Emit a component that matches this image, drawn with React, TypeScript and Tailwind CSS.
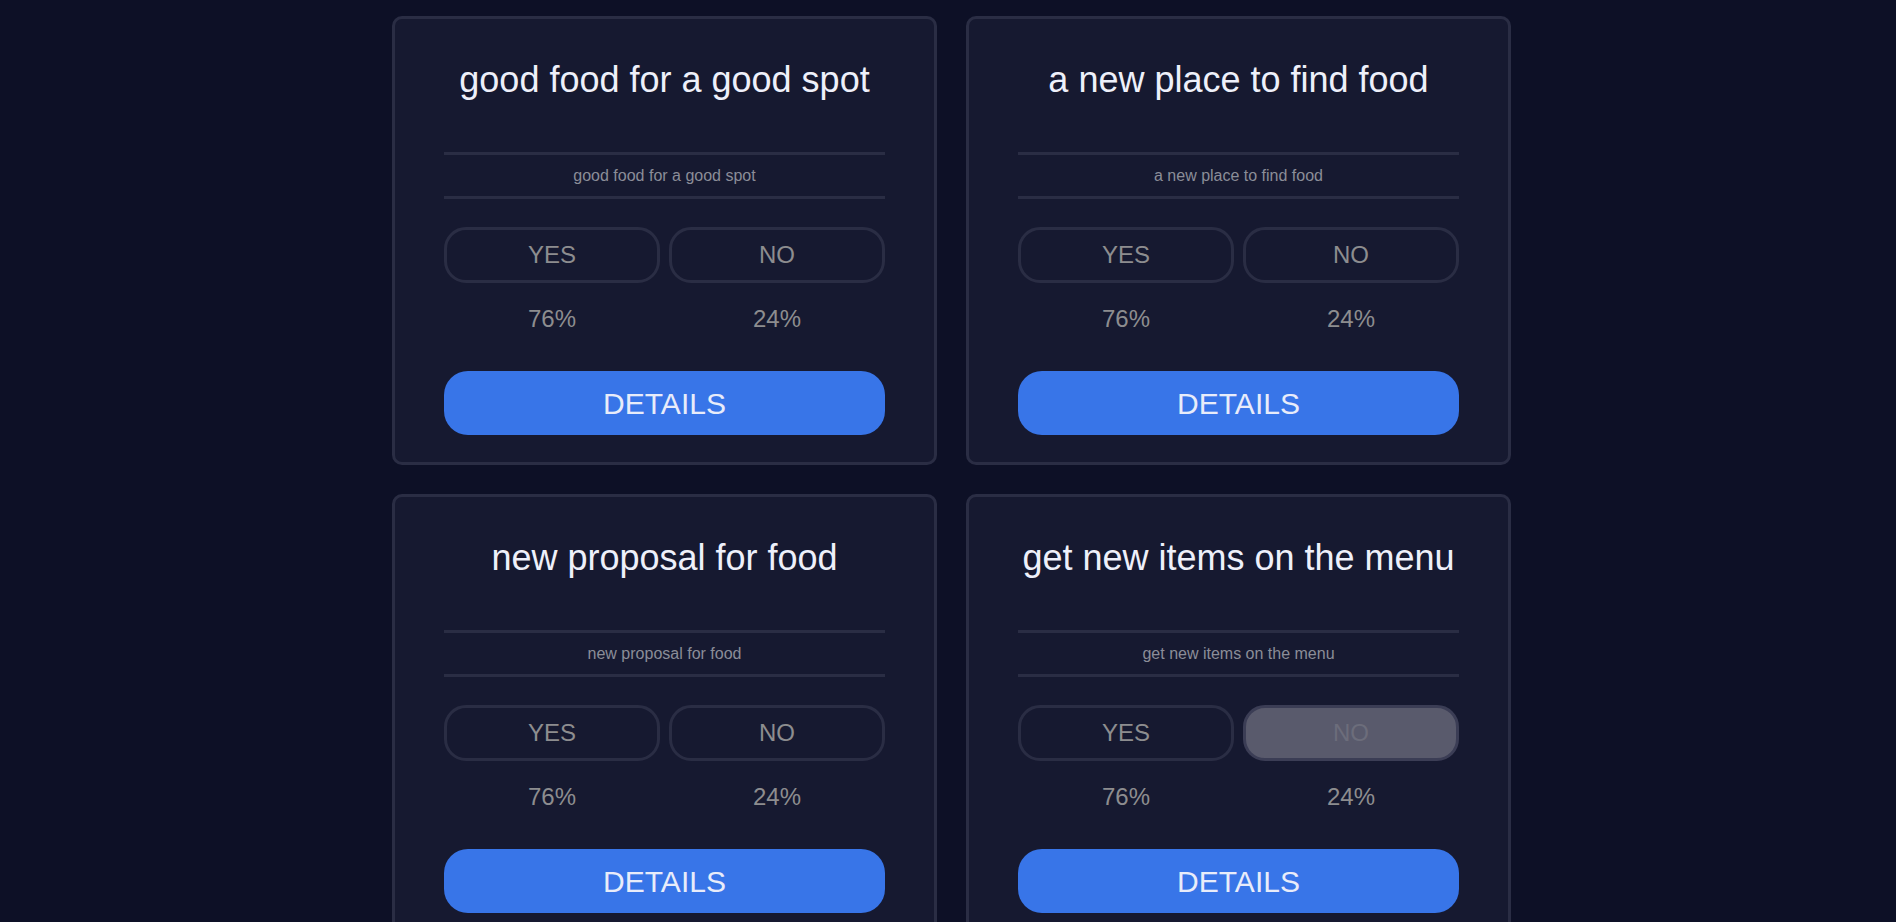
import React from "react";

type Poll = { title: string; yes: number; no: number; noDisabled?: boolean };

const polls: Poll[] = [
  { title: "good food for a good spot", yes: 76, no: 24 },
  { title: "a new place to find food", yes: 76, no: 24 },
  { title: "new proposal for food", yes: 76, no: 24 },
  { title: "get new items on the menu", yes: 76, no: 24, noDisabled: true },
];

function Card({ poll }: { poll: Poll }) {
  return (
    <div className="w-[545px] rounded-[10px] border-[3px] border-[#2a2d44] bg-[#161930] px-[49px] pt-[41px] pb-[27px]">
      <h2 className="text-center text-[36px] leading-[40px] text-[#eef0fa] font-normal">
        {poll.title}
      </h2>
      <div className="mt-[52px] border-y-[3px] border-[#2a2d44] py-[8px] text-center text-[16px] leading-[25px] text-[#8b8d98]">
        {poll.title}
      </div>
      <div className="mt-[28px] grid grid-cols-2 gap-[9px]">
        <button className="h-[56px] rounded-[22px] border-[3px] border-[#2a2d44] bg-transparent text-[24px] text-[#8d8d8f]">
          YES
        </button>
        {poll.noDisabled ? (
          <button className="h-[56px] rounded-[22px] border-[3px] border-[#3b3d55] bg-[#595a6c] text-[24px] text-[#6c6d7b]">
            NO
          </button>
        ) : (
          <button className="h-[56px] rounded-[22px] border-[3px] border-[#2a2d44] bg-transparent text-[24px] text-[#8d8d8f]">
            NO
          </button>
        )}
      </div>
      <div className="mt-[20px] grid grid-cols-2 gap-[9px] text-center text-[24px] leading-[32px] text-[#8d8d8f]">
        <div>{poll.yes}%</div>
        <div>{poll.no}%</div>
      </div>
      <button className="mt-[36px] h-[64px] w-full rounded-[24px] bg-[#3875e8] text-[30px] text-[#e8ecfa]">
        DETAILS
      </button>
    </div>
  );
}

export default function App() {
  return (
    <div
      className="min-h-screen w-full bg-[#0d1026] pt-[16px] pb-[30px]"
      style={{ fontFamily: '"Liberation Sans", Arial, sans-serif' }}
    >
      <div className="flex justify-center pl-[7px]">
        <div className="grid grid-cols-[545px_545px] gap-[29px]">
          {polls.map((p, i) => (
            <Card key={i} poll={p} />
          ))}
        </div>
      </div>
    </div>
  );
}
